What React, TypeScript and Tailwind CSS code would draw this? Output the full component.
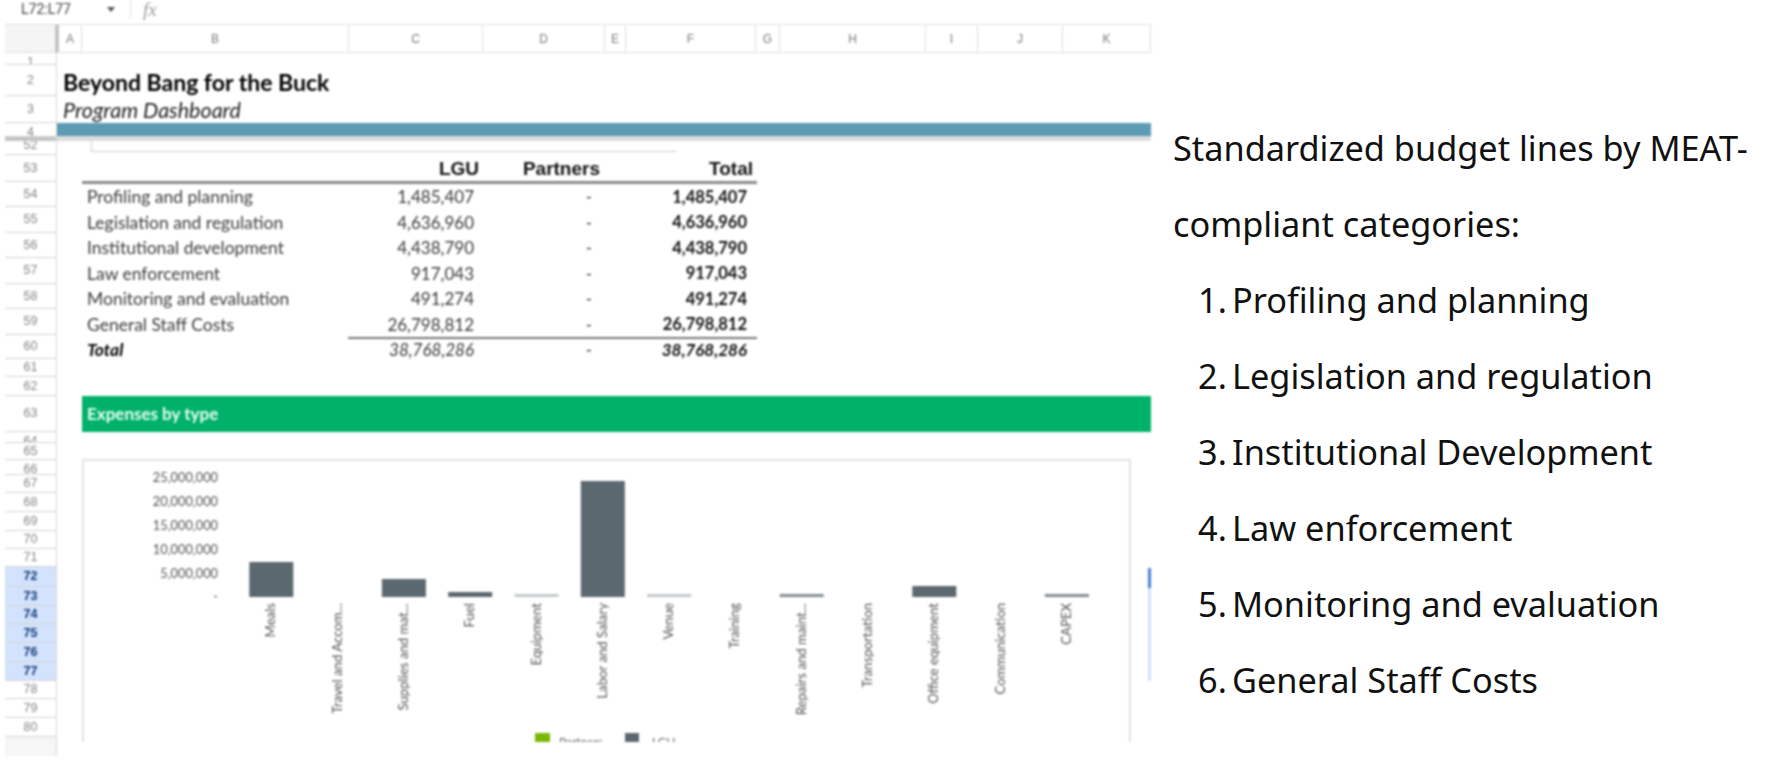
import React from "react";

const columns = [
  { label: "A", w: "w-[23px]" },
  { label: "B", w: "w-[267px]" },
  { label: "C", w: "w-[134px]" },
  { label: "D", w: "w-[122px]" },
  { label: "E", w: "w-[21px]" },
  { label: "F", w: "w-[130px]" },
  { label: "G", w: "w-[24px]" },
  { label: "H", w: "w-[146px]" },
  { label: "I", w: "w-[52px]" },
  { label: "J", w: "w-[85px]" },
  { label: "K", w: "w-[88px]" },
];

// squashed rows keep their number at the top so the line cuts through it
const gutterRows = [
  { n: 1, h: "h-[12px]", squashed: true },
  { n: 2, h: "h-[31px]" },
  { n: 3, h: "h-[27px]" },
  { n: 4, h: "h-[14px]", squashed: true, band: true },
  { n: 52, h: "h-[18px]" },
  { n: 53, h: "h-[27px]" },
  { n: 54, h: "h-[25px]" },
  { n: 55, h: "h-[26px]" },
  { n: 56, h: "h-[25px]" },
  { n: 57, h: "h-[26px]" },
  { n: 58, h: "h-[25px]" },
  { n: 59, h: "h-[26px]" },
  { n: 60, h: "h-[24px]" },
  { n: 61, h: "h-[18px]" },
  { n: 62, h: "h-[19px]" },
  { n: 63, h: "h-[36px]" },
  { n: 64, h: "h-[11px]", squashed: true },
  { n: 65, h: "h-[17px]" },
  { n: 66, h: "h-[15px]", squashed: true },
  { n: 67, h: "h-[18px]" },
  { n: 68, h: "h-[19px]" },
  { n: 69, h: "h-[19px]" },
  { n: 70, h: "h-[18px]" },
  { n: 71, h: "h-[18px]" },
  { n: 72, h: "h-[20px]", selected: true },
  { n: 73, h: "h-[19px]", selected: true },
  { n: 74, h: "h-[18px]", selected: true },
  { n: 75, h: "h-[19px]", selected: true },
  { n: 76, h: "h-[19px]", selected: true },
  { n: 77, h: "h-[19px]", selected: true },
  { n: 78, h: "h-[18px]" },
  { n: 79, h: "h-[19px]" },
  { n: 80, h: "h-[19px]" },
];

const budget = [
  { name: "Profiling and planning", lgu: "1,485,407" },
  { name: "Legislation and regulation", lgu: "4,636,960" },
  { name: "Institutional development", lgu: "4,438,790" },
  { name: "Law enforcement", lgu: "917,043" },
  { name: "Monitoring and evaluation", lgu: "491,274" },
  { name: "General Staff Costs", lgu: "26,798,812" },
];

const ticks = [
  { label: "25,000,000", y: 482 },
  { label: "20,000,000", y: 506 },
  { label: "15,000,000", y: 530 },
  { label: "10,000,000", y: 554 },
  { label: "5,000,000", y: 578 },
  { label: "-", y: 601 },
];

// top = bar's top edge, everything sits on the zero line at y 597
const bars = [
  { label: "Meals", top: 562, fill: "#5c6870" },
  { label: "Travel and Accom...", top: 597, fill: "#5c6870" },
  { label: "Supplies and mat...", top: 579, fill: "#5c6870" },
  { label: "Fuel", top: 592, fill: "#5c6870" },
  { label: "Equipment", top: 594, fill: "#c4c8cb" },
  { label: "Labor and Salary", top: 481, fill: "#5c6870" },
  { label: "Venue", top: 594, fill: "#c4c8cb" },
  { label: "Training", top: 597, fill: "#5c6870" },
  { label: "Repairs and maint...", top: 594, fill: "#858e94" },
  { label: "Transportation", top: 597, fill: "#5c6870" },
  { label: "Office equipment", top: 586, fill: "#5c6870" },
  { label: "Communication", top: 597, fill: "#5c6870" },
  { label: "CAPEX", top: 594, fill: "#858e94" },
];

const categories = [
  "Profiling and planning",
  "Legislation and regulation",
  "Institutional Development",
  "Law enforcement",
  "Monitoring and evaluation",
  "General Staff Costs",
];

const ExpenseChart = () => (
  <svg viewBox="82 459 1049 283" className="w-[1049px] h-[283px]" fontFamily="Lato, sans-serif">
    {ticks.map((t) => (
      <text key={t.label} x={218} y={t.y} textAnchor="end" fontSize={12.8} fill="#555">
        {t.label}
      </text>
    ))}
    {bars.map((b, i) => {
      const cx = 271.3 + i * 66.3;
      return (
        <g key={b.label}>
          {b.top < 597 && <rect x={cx - 22} y={b.top} width={44} height={597 - b.top} fill={b.fill} />}
          <text
            x={cx + 4}
            y={603}
            transform={`rotate(-90 ${cx + 4} 603)`}
            textAnchor="end"
            fontSize={13.2}
            fill="#555"
          >
            {b.label}
          </text>
        </g>
      );
    })}
    <rect x={535} y={733} width={15} height={9} fill="#7ab800" />
    <text x={559} y={746} fontSize={12} fill="#666">Partners</text>
    <rect x={625} y={733} width={14} height={9} fill="#5c6870" />
    <text x={652} y={746} fontSize={12} fill="#666">LGU</text>
  </svg>
);

const App = () => {
  return (
    <div className="w-[1786px] h-[771px] overflow-hidden bg-white flex">
      {/* spreadsheet screenshot */}
      <div className="relative w-[1151px] pl-[5px] shrink-0 blur-[0.8px] font-['Lato',sans-serif]">
        <div className="h-[24px] flex items-center pl-[16px] pb-[6px] text-[#444] text-[14px] leading-none font-['Roboto',sans-serif]">
          <span className="w-[86px]">L72:L77</span>
          <svg viewBox="0 0 8 5" className="w-[8px] h-[5px]">
            <polygon points="0,0 8,0 4,5" fill="#555" />
          </svg>
          <div className="w-px h-[18px] bg-[#ddd] ml-[15px]"></div>
          <span className="ml-[12px] text-[#999] text-[19px] leading-none italic font-['Liberation_Serif',serif]">fx</span>
        </div>

        <div className="flex h-[29px] border-y border-[#dcdfe3] text-[12px] text-[#7a7a7a] font-['Liberation_Sans',sans-serif]">
          <div className="w-[50px] bg-[#f5f5f5]"></div>
          <div className="w-[4px] bg-[#c4c4c4]"></div>
          {columns.map((c) => (
            <div key={c.label} className={`${c.w} flex items-center justify-center border-r border-[#dcdfe3]`}>
              {c.label}
            </div>
          ))}
        </div>

        <div className="flex">
          {/* row numbers */}
          <div className="w-[52px] shrink-0 border-r border-[#d8d8d8] text-[12.5px] text-[#858585] font-['Liberation_Sans',sans-serif]">
            {gutterRows.map((r) => (
              <React.Fragment key={r.n}>
                <div
                  className={`${r.h} flex justify-center overflow-hidden border-b border-[#d4d4d4] ${
                    r.squashed ? "items-start" : "items-center"
                  } ${r.selected ? "bg-[#d3e3fd] text-[#123a75] font-bold" : ""}`}
                >
                  {r.n}
                </div>
                {r.band && <div className="h-[4px] -mb-[4px] relative bg-[#c4c4c4]"></div>}
              </React.Fragment>
            ))}
            <div className="h-[19px] bg-[#f6f6f6]"></div>
          </div>

          {/* sheet */}
          <div className="w-[1094px]">
            <div className="h-[12px]"></div>
            <div className="h-[31px] flex items-center pl-[6px] pt-[4px] text-[23px] font-bold text-black leading-none">
              Beyond Bang for the Buck
            </div>
            <div className="h-[27px] flex items-center pl-[6px] pt-[2px] text-[21.5px] italic text-[#1f1f1f] leading-none">
              Program Dashboard
            </div>
            <div className="h-[13px] bg-[#5b9bb4]"></div>
            <div className="h-[5px] bg-[#dcdcdc]"></div>
            <div className="h-[14px] pl-[34px]">
              <div className="w-[586px] h-[11px] border-l border-b border-[#d0d0d0]"></div>
            </div>

            {/* budget table */}
            <div className="ml-[25px] w-[675px] text-[#3c3c3c]">
              <div className="h-[29px] grid grid-cols-[266px_131px_121px_157px] items-end pb-[3px] leading-none border-b-[3px] border-[#8a8a8a] text-[19px] font-bold text-[#111] font-['Liberation_Sans',sans-serif]">
                <div></div>
                <div className="text-right">LGU</div>
                <div className="text-right">Partners</div>
                <div className="text-right pr-[4px]">Total</div>
              </div>
              {budget.map((row, i) => (
                <div key={row.name} className="h-[25.5px] grid grid-cols-[266px_409px] items-stretch text-[17px]">
                  <div className="pl-[5px] flex items-center text-[17.5px]">{row.name}</div>
                  <div className={`grid grid-cols-[131px_121px_157px] items-center ${i === 5 ? "border-b-2 border-[#777]" : ""}`}>
                    <div className="text-right pr-[5px]">{row.lgu}</div>
                    <div className="text-right pr-[8px]">-</div>
                    <div className="text-right pr-[10px] text-[16.5px] font-bold text-[#111]">{row.lgu}</div>
                  </div>
                </div>
              ))}
              <div className="h-[25.5px] grid grid-cols-[266px_131px_121px_157px] items-center text-[17px] italic">
                <div className="pl-[5px] text-[17.5px] font-bold text-black">Total</div>
                <div className="text-right pr-[5px]">38,768,286</div>
                <div className="text-right pr-[8px] not-italic">-</div>
                <div className="text-right pr-[10px] font-bold text-[#111]">38,768,286</div>
              </div>
            </div>

            <div className="h-[33.5px]"></div>
            <div className="ml-[25px] h-[36px] bg-[#00b16a] flex items-center pl-[5px] text-[17px] font-bold text-[#eafff4]">
              Expenses by type
            </div>
            <div className="h-[27px]"></div>
            <div className="ml-[25px] w-[1049px] h-[283px] overflow-hidden border-t-2 border-x-2 border-[#e2e2e2] box-border">
              <div className="-mt-[2px] -ml-[2px]">
                <ExpenseChart />
              </div>
            </div>
          </div>
        </div>

        {/* selected-range marker on the sheet edge */}
        <div className="absolute left-[1148px] top-[568px] w-[3px] h-[20px] bg-[#4a7fd8]"></div>
        <div className="absolute left-[1148px] top-[588px] w-[3px] h-[93px] bg-[#cfe0fb]"></div>
      </div>

      {/* categories list */}
      <div className="pl-[22px] pt-[110px] text-[34.3px] leading-[76px] text-[#111] font-['Noto_Sans',sans-serif] whitespace-nowrap">
        <p>Standardized budget lines by MEAT-</p>
        <p>compliant categories:</p>
        <ol className="pl-[25px]">
          {categories.map((c, i) => (
            <li key={c} className="flex">
              <span className="w-[34px]">{i + 1}.</span>
              <span>{c}</span>
            </li>
          ))}
        </ol>
      </div>
    </div>
  );
};

export default App;
